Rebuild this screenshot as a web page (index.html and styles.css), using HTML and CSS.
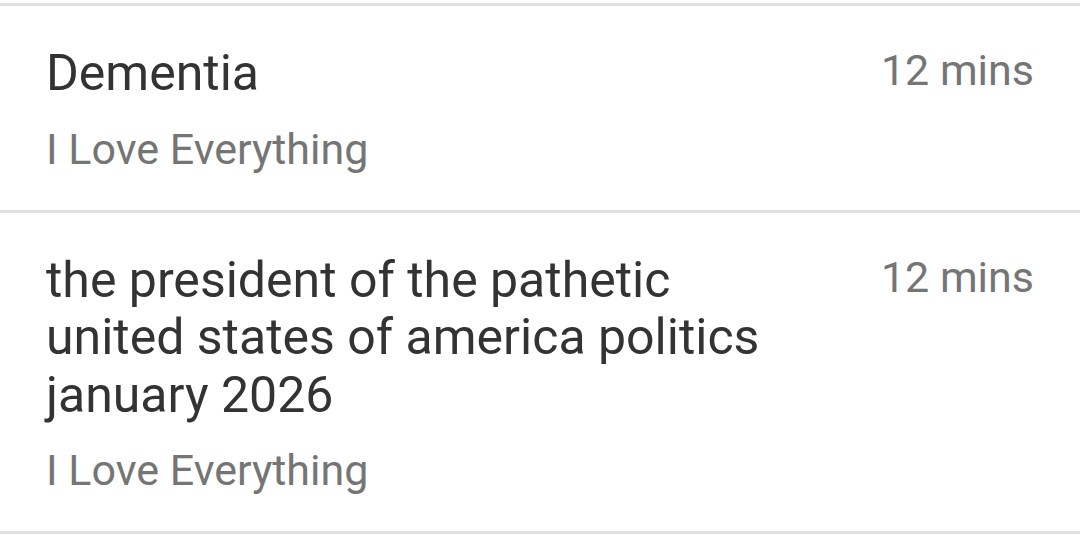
FILE: index.html
```html
<!DOCTYPE html>
<html lang="en">
<head>
    <meta charset="UTF-8">
    <meta name="viewport" content="width=device-width, initial-scale=1.0">
    <title>Notes</title>
    <link rel="stylesheet" href="styles.css">
</head>
<body>
    <div class="note-list">
        <div class="note-item">
            <div class="note-text">
                <div class="note-title">Dementia</div>
                <div class="note-folder">I Love Everything</div>
            </div>
            <div class="note-time">12 mins</div>
        </div>
        <div class="note-item">
            <div class="note-text">
                <div class="note-title">the president of the pathetic united states of america politics january 2026</div>
                <div class="note-folder">I Love Everything</div>
            </div>
            <div class="note-time">12 mins</div>
        </div>
    </div>
</body>
</html>
```

FILE: styles.css
```css
:root {
    --divider-color: #e0e0e0;
    --title-color: #333333;
    --muted-color: #757575;
}

body {
    font-family: Roboto, 'Noto Sans', sans-serif;
    margin: 0;
    padding: 0;
    background-color: #ffffff;
    overflow: hidden;
}

.note-list {
    padding-top: 3px;
    border-bottom: 3px solid var(--divider-color);
}

.note-item {
    display: flex;
    justify-content: space-between;
    align-items: flex-start;
    gap: 40px;
    padding: 39px 46px 36px 46px;
    border-top: 3px solid var(--divider-color);
}

.note-text {
    flex: 1;
    max-width: 740px;
    display: flex;
    flex-direction: column;
    gap: 21px;
}

.note-title {
    font-size: 50px;
    line-height: 57.5px;
    color: var(--title-color);
}

.note-folder {
    font-size: 43px;
    color: var(--muted-color);
}

.note-time {
    font-size: 43px;
    color: var(--muted-color);
    white-space: nowrap;
}
```
